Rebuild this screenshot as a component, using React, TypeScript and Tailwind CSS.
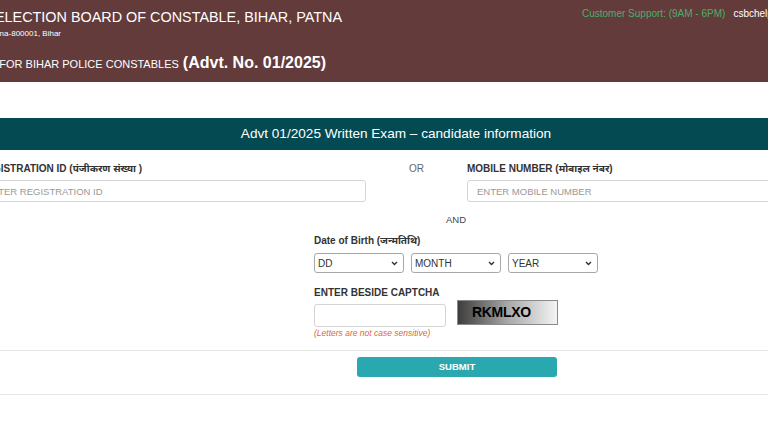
export default function App() {
  return (
    <div className="w-[768px] h-[432px] overflow-hidden bg-white font-['Liberation_Sans',Arial,'Noto_Sans',sans-serif] text-[#333]">
      {/* top header band */}
      <header className="flex h-[82px] bg-[#633b3b] text-white">
        <div className="w-[342px] shrink-0">
          <div className="flex justify-end whitespace-nowrap pt-[9px] text-[14.4px] leading-[16px]">
            CENTRAL SELECTION BOARD OF CONSTABLE, BIHAR, PATNA
          </div>
          <div className="mt-[4px] flex w-[61px] justify-end whitespace-nowrap text-[8px] leading-[9px]">
            Sardar Patel Bhawan, Patna-800001, Bihar
          </div>
          <div className="mt-[15px] flex w-[326px] items-baseline justify-end whitespace-nowrap leading-[20px]">
            <span className="text-[11px]">ONLINE APPLICATION FOR BIHAR POLICE CONSTABLES</span>
            <span className="ml-[4px] text-[16px] font-bold">(Advt. No. 01/2025)</span>
          </div>
        </div>
        <div className="flex whitespace-nowrap pl-[240px] pt-[8px] text-[10px] leading-[12px]">
          <span className="text-[#4caf6c]">Customer Support: (9AM - 6PM)</span>
          <span className="ml-[8px]">csbchelpdesk@gmail.com</span>
        </div>
      </header>

      <div className="mt-[36px] flex h-[32px] items-center justify-center bg-[#044a53] pl-[24px] text-[13.6px] text-white">
        Advt 01/2025 Written Exam – candidate information
      </div>

      {/* registration / mobile row */}
      <div className="-ml-[21px] mt-[13px] flex w-[900px]">
        <div className="w-[387px] shrink-0">
          <div className="whitespace-nowrap text-[10px] font-bold leading-[12px]">REGISTRATION ID (पंजीकरण संख्या )</div>
          <input
            className="mt-[5px] h-[22px] w-full rounded-[3px] border border-[#d4d4d4] pl-[5px] pr-[9px] text-[9.5px] uppercase outline-none placeholder:text-[#999]"
            placeholder="ENTER REGISTRATION ID"
          />
        </div>
        <div className="w-[101px] shrink-0 text-center text-[10px] leading-[12px] text-[#666]">OR</div>
        <div className="w-[387px] shrink-0">
          <div className="whitespace-nowrap text-[10px] font-bold leading-[12px]">MOBILE NUMBER (मोबाइल नंबर)</div>
          <input
            className="mt-[5px] h-[22px] w-full rounded-[3px] border border-[#d4d4d4] px-[9px] text-[9.5px] outline-none placeholder:text-[#999]"
            placeholder="ENTER MOBILE NUMBER"
          />
        </div>
      </div>

      <div className="ml-[314px] w-[284px]">
        <div className="mt-[12px] text-center text-[9.5px] leading-[12px] text-[#444]">AND</div>
        <div className="mt-[9px] whitespace-nowrap text-[10px] font-bold leading-[12px]">Date of Birth (जन्मतिथि)</div>
        <div className="mt-[6px] flex gap-[7px]">
          {["DD", "MONTH", "YEAR"].map((t) => (
            <div
              key={t}
              className="flex h-[20px] w-[90px] items-center justify-between rounded-[3px] border border-[#a8a8a8] pl-[3px] pr-[5px] text-[10px]"
            >
              <span>{t}</span>
              <svg width="7" height="5" viewBox="0 0 7 5" fill="none">
                <path d="M1 1l2.5 2.5L6 1" stroke="#333" strokeWidth="1.4" />
              </svg>
            </div>
          ))}
        </div>

        <div className="mt-[14px] text-[10px] font-bold leading-[12px]">ENTER BESIDE CAPTCHA</div>
        <div className="mt-[1px] flex items-start">
          <input className="mt-[4px] h-[23px] w-[132px] rounded-[3px] border border-[#d4d4d4] px-[6px] text-[10px] outline-none" />
          <div className="ml-[11px] flex h-[25px] w-[101px] items-center border border-[#8a8a8a] bg-gradient-to-r from-[#3e3e3e] via-[#a8a8a8] to-[#f4f4f4] pl-[14px] text-[14px] font-bold tracking-[-0.3px] text-black">
            RKMLXO
          </div>
        </div>
        <div className="mt-[1px] text-[8.5px] italic leading-[10px] text-[#e2643a]">(Letters are not case sensitive)</div>
      </div>

      <div className="mt-[12px] h-[1px] w-full bg-[#e6e6e6]" />
      <div className="ml-[357px] mt-[6px] flex h-[20px] w-[200px] items-center justify-center rounded-[3px] bg-[#2aa8af] text-[9.5px] font-bold text-white">
        SUBMIT
      </div>
      <div className="mt-[17px] h-[1px] w-full bg-[#e6e6e6]" />
    </div>
  );
}
